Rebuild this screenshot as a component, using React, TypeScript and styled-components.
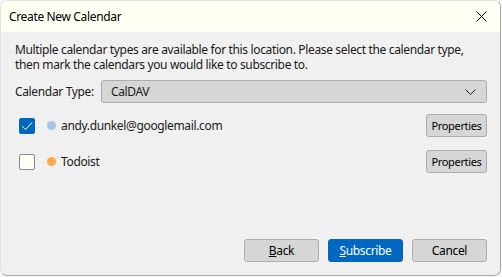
import React from 'react'
import styled, { createGlobalStyle } from 'styled-components'

const GlobalStyle = createGlobalStyle`
  html, body {
    margin: 0;
    padding: 0;
    background: #f7f7f7;
  }
  body {
    font-family: "Noto Sans", "Open Sans", sans-serif;
    font-size: 12px;
    letter-spacing: -0.35px;
    color: #1a1a1a;
  }
`

const Window = styled.div`
  width: 501px;
  height: 276px;
  box-sizing: border-box;
  border: 1px solid #a9a9a9;
  border-left-color: #e2e2e2;
  border-top-color: #e2e2e2;
  border-radius: 7px;
  overflow: hidden;
  background: #f0f0f0;
  display: flex;
  flex-direction: column;
`

const TitleBar = styled.div`
  height: 31px;
  flex: none;
  background: #fffff3;
  display: flex;
  align-items: center;
  justify-content: space-between;
  padding: 0 8px 0 8px;
  font-size: 12px;
  color: #000;
`

const CloseButton = styled.span`
  display: flex;
  width: 14px;
  height: 14px;
  align-items: center;
  justify-content: center;
  margin-right: 4px;
`

const Body = styled.div`
  flex: 1;
  padding: 10px 13px 0 14px;
  display: flex;
  flex-direction: column;
`

const Description = styled.p`
  margin: 0;
  line-height: 15px;
`

const TypeRow = styled.div`
  display: flex;
  align-items: center;
  margin-top: 8px;
`

const Label = styled.span`
  width: 86px;
  flex: none;
`

const Select = styled.div`
  flex: 1;
  height: 23px;
  box-sizing: border-box;
  border: 1px solid #acacac;
  border-radius: 3px;
  background: #d6d6d6;
  display: flex;
  align-items: center;
  justify-content: space-between;
  padding: 0 10px 0 9px;
`

const CalendarList = styled.div`
  display: flex;
  flex-direction: column;
  gap: 13px;
  margin-top: 11px;
`

const CalendarRow = styled.div`
  display: flex;
  align-items: center;
  height: 23px;
`

const Checkbox = styled.span<{ $checked?: boolean }>`
  width: 16px;
  height: 16px;
  box-sizing: border-box;
  margin-left: 4px;
  border-radius: 2px;
  border: 1px solid ${p => (p.$checked ? '#0067c0' : '#8a8a8a')};
  background: ${p => (p.$checked ? '#0067c0' : '#fffff5')};
  display: flex;
  align-items: center;
  justify-content: center;
  flex: none;
`

const Dot = styled.span<{ $color: string }>`
  width: 9px;
  height: 9px;
  border-radius: 50%;
  background: ${p => p.$color};
  margin-left: 12px;
  margin-right: 5px;
  flex: none;
`

const Name = styled.span`
  flex: 1;
  font-size: 12px;
`

const Button = styled.button<{ $primary?: boolean; $small?: boolean }>`
  font-family: inherit;
  letter-spacing: inherit;
  font-size: ${p => (p.$small ? '11px' : '12px')};
  height: 23px;
  width: ${p => (p.$small ? '61px' : '75px')};
  box-sizing: border-box;
  padding: 0;
  border-radius: 3px;
  border: 1px solid ${p => (p.$primary ? '#0067c0' : '#adadad')};
  background: ${p => (p.$primary ? '#0067c0' : '#d6d6d6')};
  color: ${p => (p.$primary ? '#fff' : '#000')};
  cursor: default;
`

const Footer = styled.div`
  margin-top: auto;
  display: flex;
  justify-content: flex-end;
  gap: 9px;
  padding-bottom: 13px;
`

const Key = styled.span`
  text-decoration: underline;
`

const calendars = [
  { name: 'andy.dunkel@googlemail.com', color: '#a3c6ea', checked: true },
  { name: 'Todoist', color: '#ffa948', checked: false },
]

export default function App() {
  return (
    <>
      <GlobalStyle />
      <Window>
        <TitleBar>
          <span>Create New Calendar</span>
          <CloseButton>
            <svg width="11" height="11" viewBox="0 0 11 11">
              <path d="M0.5 0.5 L10.5 10.5 M10.5 0.5 L0.5 10.5" stroke="#000" strokeWidth="1" fill="none" />
            </svg>
          </CloseButton>
        </TitleBar>
        <Body>
          <Description>
            Multiple calendar types are available for this location. Please select the calendar type,
            then mark the calendars you would like to subscribe to.
          </Description>
          <TypeRow>
            <Label>Calendar Type:</Label>
            <Select>
              <span>CalDAV</span>
              <svg width="11" height="6" viewBox="0 0 11 6">
                <path d="M0.5 0.5 L5.5 5.5 L10.5 0.5" stroke="#222" strokeWidth="1" fill="none" />
              </svg>
            </Select>
          </TypeRow>
          <CalendarList>
            {calendars.map(c => (
              <CalendarRow key={c.name}>
                <Checkbox $checked={c.checked}>
                  {c.checked && (
                    <svg width="12" height="10" viewBox="0 0 12 10">
                      <path d="M1 5 L4.5 8.5 L11 1.5" stroke="#fff" strokeWidth="1" fill="none" />
                    </svg>
                  )}
                </Checkbox>
                <Dot $color={c.color} />
                <Name>{c.name}</Name>
                <Button $small>Properties</Button>
              </CalendarRow>
            ))}
          </CalendarList>
          <Footer>
            <Button><Key>B</Key>ack</Button>
            <Button $primary><Key>S</Key>ubscribe</Button>
            <Button>Cancel</Button>
          </Footer>
        </Body>
      </Window>
    </>
  )
}
